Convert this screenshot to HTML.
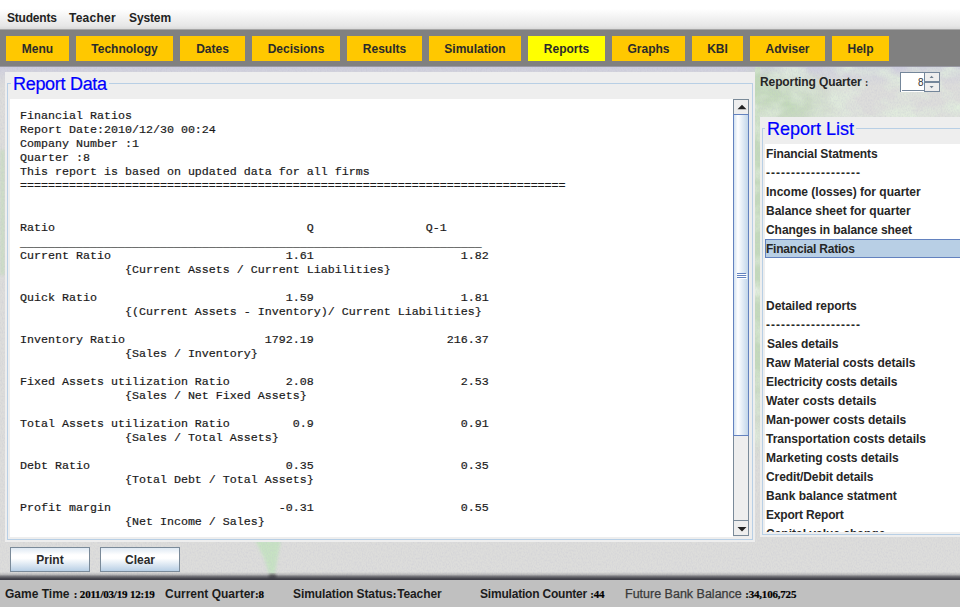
<!DOCTYPE html>
<html>
<head>
<meta charset="utf-8">
<title>Report Data</title>
<style>
html,body{margin:0;padding:0;}
body{width:962px;height:612px;background:#fff;overflow:hidden;position:relative;font-family:"Liberation Sans",sans-serif;font-size:12px;color:#222;}
#app{position:absolute;left:0;top:0;width:960px;height:607px;overflow:hidden;background:#dcdcd6;}
.abs{position:absolute;}
#menubar{left:0;top:0;width:960px;height:29px;background:linear-gradient(#fff 0px,#fff 9px,#e6e6e6 26px,#dadada 29px);border-bottom:1px solid #a6a6a6;}
#menubar span{position:absolute;top:11px;font-weight:bold;font-size:12px;line-height:14px;color:#222;white-space:pre;}
#toolbar{left:0;top:30px;width:960px;height:36px;background:#808080;border-bottom:1px solid #9898a2;}
.tb{position:absolute;top:6px;height:25px;background:#ffc800;color:#2b2b2b;font-weight:bold;font-size:12px;line-height:27px;text-align:center;}
.tb.sel{background:#ffff00;}
#main{left:0;top:66px;width:960px;height:514px;background:
radial-gradient(ellipse 60px 40px at 790px 40px,rgba(190,216,180,.9),rgba(190,216,180,0) 100%),
radial-gradient(ellipse 30px 30px at 765px 25px,rgba(190,216,180,.8),rgba(190,216,180,0) 100%),
linear-gradient(rgba(196,218,188,1) 0px,rgba(196,218,188,1) 300px,rgba(196,218,188,0) 400px) 755px 0/5px 514px no-repeat,
linear-gradient(rgba(205,205,222,1) 0px,rgba(205,205,222,.6) 6px,rgba(205,205,222,0) 20px),
#dddddb;}
.panel{background:#eeeeee;}
.tline{position:absolute;border:1px solid #b8cfe5;}
.ttl{position:absolute;color:#0000ff;font-size:18px;line-height:20px;-webkit-text-stroke:0.2px #0000ff;background:#eeeeee;white-space:pre;padding:0 2px;}
#ta{left:10px;top:99px;width:723px;height:438px;background:#fff;overflow:hidden;}
#ta pre{margin:0;position:absolute;left:10px;top:10px;font-family:"Liberation Mono",monospace;font-size:11.665px;line-height:14px;color:#1a1a1a;-webkit-text-stroke:0.2px #1a1a1a;}
#sb{left:733px;top:99px;width:16px;height:438px;background:#eeeeee;}
.li{position:absolute;left:1px;height:19px;line-height:21px;font-weight:bold;font-size:12px;color:#262626;white-space:pre;width:300px;}
#status{left:0;top:580px;width:960px;height:27px;background:#c0c0c0;}
#status span{position:absolute;top:7px;line-height:15px;font-weight:bold;font-size:12px;color:#1c1c1c;white-space:pre;}
#status span b{font-family:"Liberation Serif",serif;font-size:11px;font-weight:bold;letter-spacing:-0.2px;color:#000;-webkit-text-stroke:0.2px #000;}
.jbtn{position:absolute;box-sizing:border-box;border:1px solid #7a8a99;background:linear-gradient(#dfe9f3 0%,#ffffff 30%,#ffffff 45%,#b8cfe5 100%);font-weight:bold;font-size:12px;color:#2a2a2a;text-align:center;}
</style>
</head>
<body>
<div id="app">
  <div id="main" class="abs">
    <svg width="960" height="514" style="position:absolute;left:0;top:0">
      <filter id="mot" x="0" y="0" width="100%" height="100%">
        <feTurbulence type="fractalNoise" baseFrequency="0.035 0.05" numOctaves="3" seed="7" result="t"/>
        <feColorMatrix type="matrix" values="0 0 0 0 0.76  0 0 0 0 0.86  0 0 0 0 0.73  2.4 0 0 0 -0.95"/>
      </filter>
      <filter id="grain" x="0" y="0" width="100%" height="100%">
        <feTurbulence type="fractalNoise" baseFrequency="0.8 0.5" numOctaves="2" seed="3"/>
        <feColorMatrix type="matrix" values="0 0 0 0 0.5  0 0 0 0 0.5  0 0 0 0 0.62  0 0 0 1.1 -0.42"/>
      </filter>
      <filter id="bl"><feGaussianBlur stdDeviation="1.6"/></filter>
      <polygon points="255,474 281,474 277,496 275,508 269,508 264,492" fill="#c2e4be" opacity="0.8" filter="url(#bl)"/>
      <ellipse cx="272.5" cy="511" rx="4" ry="3" fill="#303030" opacity="0.7" filter="url(#bl)"/>
      <rect x="0" y="84" width="5" height="125" fill="#c6dcbf" opacity="0.75" filter="url(#bl)"/>
      <rect x="755" y="0" width="205" height="51" filter="url(#mot)"/>
      <rect x="755" y="51" width="5" height="330" filter="url(#mot)"/>
      <rect x="0" y="0" width="960" height="514" filter="url(#grain)" opacity="0.5"/>
    </svg>
  </div>

  <div id="menubar" class="abs">
    <span style="left:7px;letter-spacing:-0.2px">Students</span>
    <span style="left:69px;letter-spacing:0.25px">Teacher</span>
    <span style="left:129px;letter-spacing:-0.12px">System</span>
  </div>

  <div id="toolbar" class="abs">
    <div class="tb" style="left:6px;width:63px">Menu</div>
    <div class="tb" style="left:76px;width:97px">Technology</div>
    <div class="tb" style="left:180px;width:65px">Dates</div>
    <div class="tb" style="left:252px;width:88px">Decisions</div>
    <div class="tb" style="left:347px;width:75px">Results</div>
    <div class="tb" style="left:429px;width:92px">Simulation</div>
    <div class="tb sel" style="left:528px;width:77px">Reports</div>
    <div class="tb" style="left:612px;width:73px">Graphs</div>
    <div class="tb" style="left:692px;width:51px">KBI</div>
    <div class="tb" style="left:750px;width:75px">Adviser</div>
    <div class="tb" style="left:832px;width:57px">Help</div>
  </div>

  <!-- left panel -->
  <div class="abs panel" style="left:5px;top:72px;width:750px;height:470px;"></div>
  <div class="tline" style="left:7px;top:83px;width:744px;height:455px;"></div>
  <div class="ttl" style="left:11px;top:74px;letter-spacing:-0.3px">Report Data</div>
  <div id="ta" class="abs"><pre>Financial Ratios
Report Date:2010/12/30 00:24
Company Number :1
Quarter :8
This report is based on updated data for all firms
==============================================================================


Ratio                                    Q                Q-1
<span style="position:relative;top:2px;color:#000;-webkit-text-stroke:0.15px #000">__________________________________________________________________</span>
Current Ratio                         1.61                     1.82
               {Current Assets / Current Liabilities}

Quick Ratio                           1.59                     1.81
               {(Current Assets - Inventory)/ Current Liabilities}

Inventory Ratio                    1792.19                   216.37
               {Sales / Inventory}

Fixed Assets utilization Ratio        2.08                     2.53
               {Sales / Net Fixed Assets}

Total Assets utilization Ratio         0.9                     0.91
               {Sales / Total Assets}

Debt Ratio                            0.35                     0.35
               {Total Debt / Total Assets}

Profit margin                        -0.31                     0.55
               {Net Income / Sales}
</pre></div>
  <div id="sb" class="abs">
    <div class="abs" style="left:0;top:0;width:16px;height:437px;border-left:1px solid #7a8a99;border-right:1px solid #7a8a99;box-sizing:border-box;"></div>
    <div class="abs" style="left:0;top:0;width:16px;height:15px;box-sizing:border-box;border:1px solid #7a8a99;border-bottom:none;background:#eeeeee;">
      <svg width="14" height="14" style="position:absolute;left:0;top:0"><polygon points="3.5,9.2 12.5,9.2 8,4.7" fill="#222"/></svg>
    </div>
    <div class="abs" style="left:0;top:15px;width:16px;height:322px;box-sizing:border-box;border:1px solid #6382bf;background:linear-gradient(90deg,#d3e2f1 0%,#ffffff 28%,#f4f8fc 40%,#c2d6ea 100%);">
      <div class="abs" style="left:3px;top:158px;width:9px;height:1px;background:#6382bf;box-shadow:1px 1px 0 #fff,0 2px 0 #6382bf,1px 3px 0 #fff,0 4px 0 #6382bf,1px 5px 0 #fff;"></div>
    </div>
    <div class="abs" style="left:0;top:421px;width:16px;height:16px;box-sizing:border-box;border:1px solid #7a8a99;background:#eeeeee;">
      <svg width="14" height="14" style="position:absolute;left:0;top:0"><polygon points="3.5,6 12.5,6 8,10.5" fill="#222"/></svg>
    </div>
  </div>

  <!-- buttons -->
  <div class="jbtn" style="left:10px;top:547px;width:80px;height:25px;line-height:25px;">Print</div>
  <div class="jbtn" style="left:100px;top:547px;width:80px;height:25px;line-height:25px;">Clear</div>

  <!-- reporting quarter -->
  <div class="abs" style="left:760px;top:75px;font-weight:bold;font-size:12px;line-height:15px;color:#262626;white-space:pre;letter-spacing:-0.1px">Reporting Quarter <span style="font-family:'Liberation Serif',serif;font-size:10px">:</span></div>
  <div class="abs" style="left:900px;top:72px;width:40px;height:20px;background:#74869a;"></div>
  <div class="abs" style="left:901px;top:73px;width:23px;height:19px;background:#fff;font-size:10px;line-height:19px;text-align:right;padding-right:0.5px;color:#333;box-sizing:border-box;border-bottom:1px solid #fff;"><div style="position:absolute;left:1px;top:17px;width:22px;height:1px;background:#74869a"></div>8</div>
  <div class="abs" style="left:925px;top:73px;width:14px;height:8px;background:#eeeeee;"><svg width="14" height="8" style="position:absolute;left:0;top:0"><polygon points="4.6,5 8.6,5 6.6,2.8" fill="#6e7e8e"/></svg></div>
  <div class="abs" style="left:925px;top:83px;width:14px;height:8px;background:#eeeeee;"><svg width="14" height="8" style="position:absolute;left:0;top:0"><polygon points="4.6,3 8.6,3 6.6,5.2" fill="#6e7e8e"/></svg></div>

  <!-- right panel -->
  <div class="abs panel" style="left:760px;top:117px;width:200px;height:420px;"></div>
  <div class="tline" style="left:762px;top:128px;width:210px;height:405px;"></div>
  <div class="ttl" style="left:765px;top:119px;">Report List</div>
  <div class="abs" id="list" style="left:765px;top:144px;width:195px;height:388px;background:#fff;overflow:hidden;">
    <div class="li" style="top:0px;letter-spacing:-0.1px">Financial Statments</div>
    <div class="li" style="top:19px;letter-spacing:1px">-------------------</div>
    <div class="li" style="top:38px">Income (losses) for quarter</div>
    <div class="li" style="top:57px">Balance sheet for quarter</div>
    <div class="li" style="top:76px;letter-spacing:-0.06px">Changes in balance sheet</div>
    <div class="li" style="top:95px;left:0;padding-left:0;box-sizing:border-box;background:#b8cfe5;border:1px solid #6382bf;line-height:19px;;letter-spacing:-0.21px">Financial Ratios</div>
    <div class="li" style="top:152px;letter-spacing:-0.04px">Detailed reports</div>
    <div class="li" style="top:171px;letter-spacing:1px">-------------------</div>
    <div class="li" style="top:190px;left:2px;letter-spacing:-0.1px">Sales details</div>
    <div class="li" style="top:209px">Raw Material costs details</div>
    <div class="li" style="top:228px;letter-spacing:-0.08px">Electricity costs details</div>
    <div class="li" style="top:247px;letter-spacing:0.09px">Water costs details</div>
    <div class="li" style="top:266px;letter-spacing:0.04px">Man-power costs details</div>
    <div class="li" style="top:285px">Transportation costs details</div>
    <div class="li" style="top:304px">Marketing costs details</div>
    <div class="li" style="top:323px;letter-spacing:-0.1px">Credit/Debit details</div>
    <div class="li" style="top:342px">Bank balance statment</div>
    <div class="li" style="top:361px;letter-spacing:-0.18px">Export Report</div>
    <div class="li" style="top:380px">Capital value change</div>
  </div>

  <!-- shadow + status -->
  <div class="abs" style="left:0;top:572px;width:960px;height:8px;background:linear-gradient(rgba(60,60,68,0) 0%,rgba(60,60,68,.2) 30%,rgba(60,60,68,.65) 55%,rgba(60,60,68,.92) 80%,#3a3a44 100%);"></div>
  <div id="status" class="abs">
    <span style="left:5px">Game Time <b style="margin-left:1px">: 2011/03/19 12:19</b></span>
    <span style="left:165px">Current Quarter<b>:8</b></span>
    <span style="left:293px;letter-spacing:-0.1px">Simulation Status<b style="margin-right:1px">:</b>Teacher</span>
    <span style="left:480px;letter-spacing:-0.2px">Simulation Counter <b>:44</b></span>
    <span style="left:625px;color:#3a3a3a;font-weight:normal;font-size:12.5px;-webkit-text-stroke:0.25px #3a3a3a">Future Bank Balance <b style="color:#000">:34,106,725</b></span>
  </div>
</div>
</body>
</html>
